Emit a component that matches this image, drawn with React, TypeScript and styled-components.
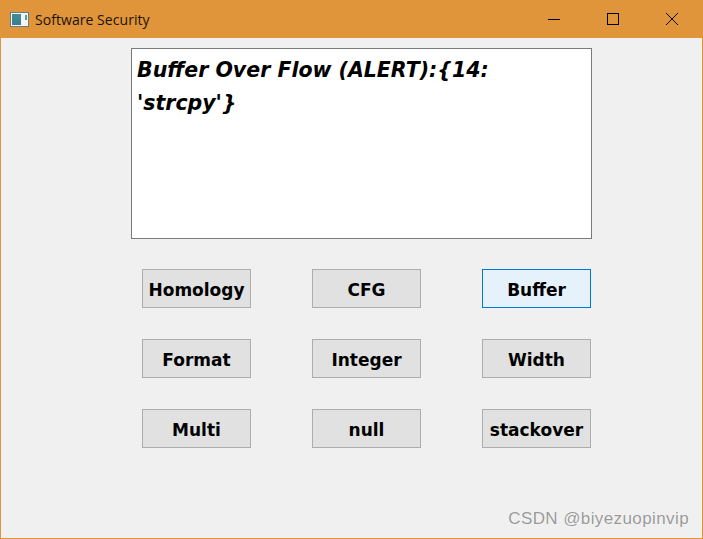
import React from 'react';
import styled, { createGlobalStyle } from 'styled-components';

const GlobalStyle = createGlobalStyle`
  html, body {
    margin: 0;
    padding: 0;
    background: #f0f0f0;
  }
`;

const WindowFrame = styled.div`
  position: relative;
  box-sizing: border-box;
  width: 703px;
  height: 539px;
  display: flex;
  flex-direction: column;
  background: #f0f0f0;
  border: 1px solid #e0953a;
  border-top: none;
`;

const TitleBar = styled.div`
  height: 38px;
  margin: 0 -1px;
  flex: none;
  display: flex;
  align-items: center;
  background: #e0953a;
  padding: 0 2px 0 10px;
`;

const AppIcon = styled.svg`
  width: 19px;
  height: 15px;
  margin-right: 6px;
  flex: none;
`;

const Title = styled.span`
  flex: 1;
  font-family: 'Open Sans', 'Noto Sans', sans-serif;
  font-size: 14px;
  letter-spacing: 0.05px;
  color: #1c1206;
`;

const WinButton = styled.div`
  width: 59px;
  height: 38px;
  display: flex;
  align-items: center;
  justify-content: center;
`;

const Content = styled.main`
  flex: 1;
  display: flex;
  flex-direction: column;
  align-items: flex-start;
  padding: 10px 0 0 130px;
`;

const OutputBox = styled.div`
  box-sizing: border-box;
  width: 461px;
  height: 191px;
  padding: 5px 5px;
  background: #fff;
  border: 1px solid #7a7a7a;
  font-family: 'DejaVu Sans', 'Open Sans', sans-serif;
  font-size: 20.5px;
  font-weight: 700;
  font-style: italic;
  line-height: 33px;
  color: #000;
`;

const ButtonGrid = styled.div`
  display: grid;
  grid-template-columns: repeat(3, 109px);
  grid-auto-rows: 39px;
  column-gap: 61px;
  row-gap: 31px;
  margin: 30px 0 0 11px;
`;

const ActionButton = styled.button<{ $active?: boolean }>`
  box-sizing: border-box;
  padding: 2px 0 0;
  border: 1px solid ${(p) => (p.$active ? '#0078d7' : '#adadad')};
  background: ${(p) => (p.$active ? '#e5f1fb' : '#e1e1e1')};
  font-family: 'DejaVu Sans', 'Open Sans', sans-serif;
  font-size: 17px;
  font-weight: 700;
  color: #000;
`;

const Watermark = styled.div`
  position: absolute;
  right: 13px;
  bottom: 9px;
  font-family: 'Liberation Sans', Arial, sans-serif;
  font-size: 17px;
  letter-spacing: 0.4px;
  color: rgba(120, 120, 120, 0.75);
  text-shadow: 0 0 1px rgba(255, 255, 255, 0.8);
`;

const buttons = ['Homology', 'CFG', 'Buffer', 'Format', 'Integer', 'Width', 'Multi', 'null', 'stackover'];

export default function App() {
  return (
    <>
      <GlobalStyle />
      <WindowFrame>
        <TitleBar>
          <AppIcon viewBox="0 0 19 15">
            <defs>
              <linearGradient id="iconFill" x1="0" y1="0" x2="0" y2="1">
                <stop offset="0" stopColor="#3f8f8c" />
                <stop offset="1" stopColor="#3d7a98" />
              </linearGradient>
            </defs>
            <rect x="0.5" y="0.5" width="18" height="14" fill="#f4f4f4" stroke="#6d7a80" />
            <rect x="2" y="2" width="9" height="11" fill="url(#iconFill)" />
            <rect x="15" y="3" width="2" height="5" fill="#4f9f9a" />
          </AppIcon>
          <Title>Software Security</Title>
          <WinButton>
            <svg width="12" height="12" viewBox="0 0 12 12">
              <path d="M0 6.5H12" stroke="#000" strokeWidth="1" />
            </svg>
          </WinButton>
          <WinButton>
            <svg width="12" height="12" viewBox="0 0 12 12">
              <rect x="0.5" y="0.5" width="11" height="11" fill="none" stroke="#000" />
            </svg>
          </WinButton>
          <WinButton>
            <svg width="12" height="12" viewBox="0 0 12 12">
              <path d="M0 0L12 12M12 0L0 12" stroke="#000" strokeWidth="1" />
            </svg>
          </WinButton>
        </TitleBar>
        <Content>
          <OutputBox>
            Buffer Over Flow (ALERT):{'{'}14:
            <br />
            'strcpy'{'}'}
          </OutputBox>
          <ButtonGrid>
            {buttons.map((label) => (
              <ActionButton key={label} $active={label === 'Buffer'}>
                {label}
              </ActionButton>
            ))}
          </ButtonGrid>
        </Content>
        <Watermark>CSDN @biyezuopinvip</Watermark>
      </WindowFrame>
    </>
  );
}
